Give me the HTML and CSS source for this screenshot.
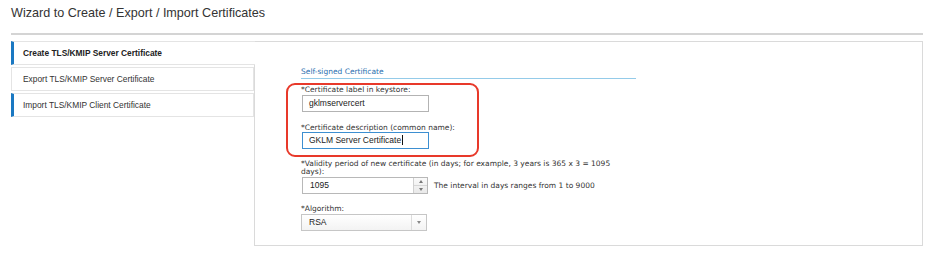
FILE: index.html
```html
<!DOCTYPE html>
<html lang="en">
<head>
  <meta charset="UTF-8">
  <title>Wizard to Create / Export / Import Certificates</title>
  <link rel="stylesheet" href="styles.css">
</head>
<body>
  <div class="page">
    <h1 class="title">Wizard to Create / Export / Import Certificates</h1>
    <div class="rule"></div>
    <div class="wizard">
      <ul class="tabs">
        <li class="tab active">Create TLS/KMIP Server Certificate</li>
        <li class="tab">Export TLS/KMIP Server Certificate</li>
        <li class="tab marked">Import TLS/KMIP Client Certificate</li>
      </ul>
      <div class="panel">
        <div class="form">
          <div class="section-title">Self-signed Certificate</div>
          <div class="highlight">
            <label class="field-label">*Certificate label in keystore:</label>
            <div class="text-input">gklmservercert</div>
            <label class="field-label spaced">*Certificate description (common name):</label>
            <div class="text-input focused">GKLM Server Certificate<span class="caret"></span></div>
          </div>
          <label class="field-label wrapped">*Validity period of new certificate (in days; for example, 3 years is 365 x 3 = 1095<br>days):</label>
          <div class="spinner-row">
            <div class="spinner">
              <span class="spinner-value">1095</span>
              <span class="spin-buttons">
                <span class="spin up"></span>
                <span class="spin down"></span>
              </span>
            </div>
            <span class="hint">The interval in days ranges from 1 to 9000</span>
          </div>
          <label class="field-label algo">*Algorithm:</label>
          <div class="select">
            <span class="select-value">RSA</span>
            <span class="select-arrow"></span>
          </div>
        </div>
      </div>
    </div>
  </div>
</body>
</html>
```

FILE: styles.css
```css
body {
  margin: 0;
  background: #fff;
  font-family: 'Liberation Sans', Arial, sans-serif;
}
.page {
  padding: 0 13px 0 11px;
}
.title {
  margin: 0;
  padding-top: 6px;
  font-size: 12.6px;
  font-weight: normal;
  line-height: 15px;
  color: #333;
}
.rule {
  margin-top: 12px;
  height: 2px;
  background: #d4d4d4;
}
.wizard {
  display: flex;
  margin-top: 6px;
}
.tabs {
  list-style: none;
  margin: 0;
  padding: 0;
  width: 243px;
  display: flex;
  flex-direction: column;
  gap: 2px;
}
.tab {
  box-sizing: border-box;
  height: 24px;
  border: 1px solid #e4e4e4;
  padding-left: 11px;
  font-size: 8.4px;
  line-height: 22px;
  color: #333;
  background: #fff;
}
.tab.active {
  position: relative;
  margin-right: -1px;
  border-left: 3px solid #1a78c2;
  border-right: none;
  padding-left: 9px;
  font-weight: bold;
  color: #222;
}
.tab.marked {
  border-left: 3px solid #1a78c2;
  padding-left: 9px;
}
.panel {
  flex: 1;
  box-sizing: border-box;
  height: 205px;
  border: 1px solid #dadada;
}
.form {
  width: 335px;
  margin-left: 46px;
  padding-top: 25px;
  font-family: 'DejaVu Sans', Verdana, sans-serif;
}
.section-title {
  font-size: 7.5px;
  line-height: 9px;
  color: #2b6fb0;
  padding-bottom: 2px;
  border-bottom: 1px solid #94cbe9;
}
.highlight {
  box-sizing: border-box;
  width: 193px;
  margin: 4px 0 0 -15px;
  padding: 0 0 6px 13px;
  border: 2px solid #e8392a;
  border-radius: 9px;
}
.field-label {
  display: block;
  font-size: 7.5px;
  line-height: 9px;
  color: #333;
}
.field-label.spaced {
  margin-top: 11px;
}
.field-label.wrapped {
  margin-top: 3px;
  line-height: 8px;
}
.field-label.algo {
  margin-top: 10px;
}
.text-input {
  box-sizing: border-box;
  width: 127px;
  height: 17px;
  margin: 1px 0 0 1px;
  padding-left: 6px;
  border: 1px solid #b3b3b3;
  font-family: 'Liberation Sans', Arial, sans-serif;
  font-size: 8.5px;
  line-height: 15px;
  color: #222;
  background: #fff;
}
.text-input.focused {
  margin-top: 0;
  border-color: #3d8fd1;
}
.caret {
  display: inline-block;
  width: 1px;
  height: 10px;
  margin-left: 1px;
  background: #111;
  vertical-align: -2px;
}
.spinner-row {
  display: flex;
  align-items: center;
  margin-top: 1px;
}
.spinner {
  box-sizing: border-box;
  display: flex;
  width: 126px;
  height: 17px;
  margin-left: 1px;
  border: 1px solid #b8b8b8;
  background: #fff;
}
.spinner-value {
  flex: 1;
  padding-left: 7px;
  font-family: 'Liberation Sans', Arial, sans-serif;
  font-size: 8.5px;
  line-height: 15px;
  color: #222;
}
.spin-buttons {
  width: 13px;
  display: flex;
  flex-direction: column;
  border-left: 1px solid #d0d0d0;
  background: linear-gradient(#fafafa, #e9e9e9);
}
.spin {
  flex: 1;
  display: flex;
  align-items: center;
  justify-content: center;
}
.spin.up {
  border-bottom: 1px solid #d6d6d6;
}
.spin.up::before {
  content: '';
  border-left: 2.5px solid transparent;
  border-right: 2.5px solid transparent;
  border-bottom: 3px solid #777;
}
.spin.down::before {
  content: '';
  border-left: 2.5px solid transparent;
  border-right: 2.5px solid transparent;
  border-top: 3px solid #777;
}
.hint {
  margin-left: 6px;
  font-size: 7.5px;
  color: #333;
}
.select {
  box-sizing: border-box;
  display: flex;
  width: 126px;
  height: 17px;
  margin-top: 1px;
  border: 1px solid #c6c6c6;
  background: linear-gradient(#fff, #f3f3f3);
}
.select-value {
  flex: 1;
  padding-left: 7px;
  font-family: 'Liberation Sans', Arial, sans-serif;
  font-size: 8.5px;
  line-height: 15px;
  color: #222;
}
.select-arrow {
  width: 14px;
  display: flex;
  align-items: center;
  justify-content: center;
  border-left: 1px solid #dcdcdc;
}
.select-arrow::before {
  content: '';
  border-left: 2.5px solid transparent;
  border-right: 2.5px solid transparent;
  border-top: 3px solid #888;
}
```
